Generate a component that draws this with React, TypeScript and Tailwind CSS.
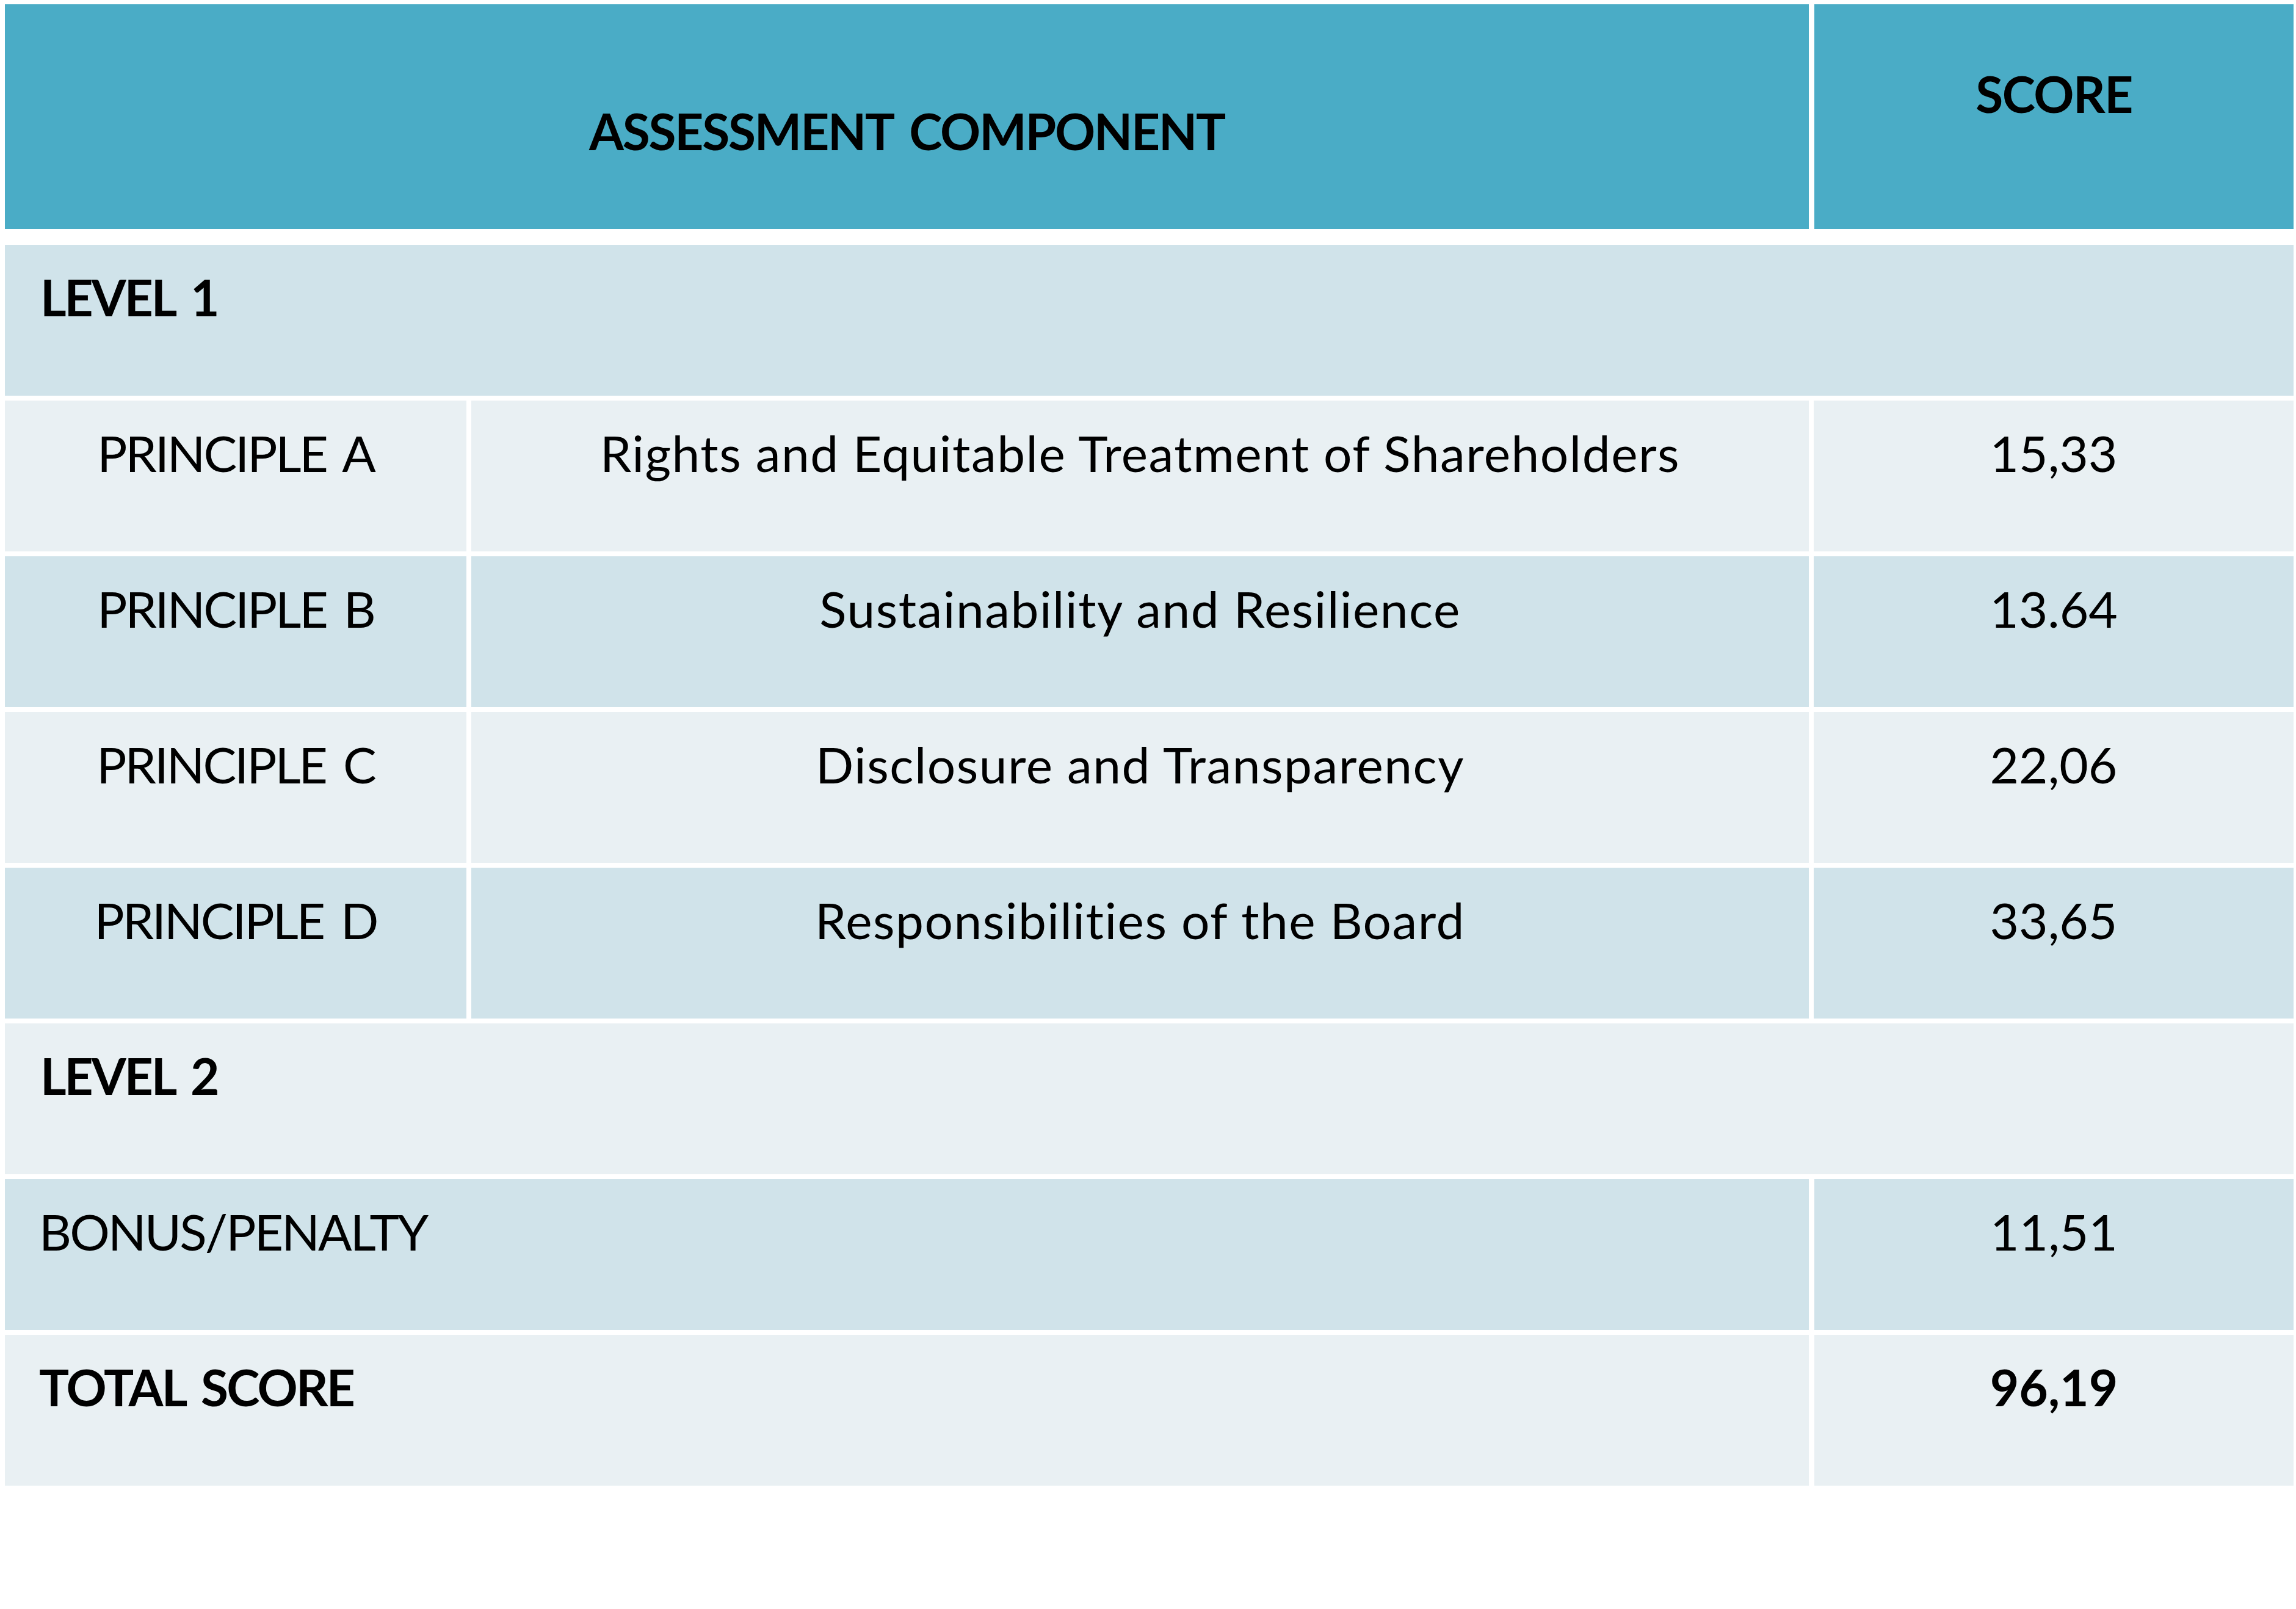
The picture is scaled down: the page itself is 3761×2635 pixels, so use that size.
import React from 'react';

type Row =
  | { kind: 'level'; label: string; tone: 'dark' | 'light' }
  | { kind: 'principle'; label: string; text: string; score: string; tone: 'dark' | 'light' }
  | { kind: 'wide'; label: string; score: string; tone: 'dark' | 'light'; bold?: boolean };

const ROWS: Row[] = [
  { kind: 'level', label: 'LEVEL 1', tone: 'dark' },
  { kind: 'principle', label: 'PRINCIPLE A', text: 'Rights and Equitable Treatment of Shareholders', score: '15,33', tone: 'light' },
  { kind: 'principle', label: 'PRINCIPLE B', text: 'Sustainability and Resilience', score: '13.64', tone: 'dark' },
  { kind: 'principle', label: 'PRINCIPLE C', text: 'Disclosure and Transparency', score: '22,06', tone: 'light' },
  { kind: 'principle', label: 'PRINCIPLE D', text: 'Responsibilities of the Board', score: '33,65', tone: 'dark' },
  { kind: 'level', label: 'LEVEL 2', tone: 'light' },
  { kind: 'wide', label: 'BONUS/PENALTY', score: '11,51', tone: 'dark' },
  { kind: 'wide', label: 'TOTAL SCORE', score: '96,19', tone: 'light', bold: true },
];

const tone = (t: 'dark' | 'light') => (t === 'dark' ? 'bg-[#d0e3ea]' : 'bg-[#e9f0f3]');

function TableRow({ row }: { row: Row }) {
  const bg = tone(row.tone);
  if (row.kind === 'level') {
    return (
      <div className={`h-[247px] ${bg} pl-[58px] pt-[44px] font-bold tracking-[-3px] [word-spacing:10px]`}>
        {row.label}
      </div>
    );
  }
  if (row.kind === 'principle') {
    return (
      <div className="flex h-[247px] gap-[8px]">
        <div className={`w-[756px] ${bg} pt-[44px] text-center tracking-[-3px] [word-spacing:10px]`}>{row.label}</div>
        <div className={`w-[2191px] ${bg} pt-[44px] text-center tracking-[1.5px]`}>{row.text}</div>
        <div className={`flex-1 ${bg} pt-[44px] text-center`}>{row.score}</div>
      </div>
    );
  }
  return (
    <div className={`flex h-[247px] gap-[9px] ${row.bold ? 'font-bold' : ''}`}>
      <div className={`w-[2955px] ${bg} pl-[56px] pt-[44px] tracking-[-2.8px] [word-spacing:10px]`}>{row.label}</div>
      <div className={`flex-1 ${bg} pt-[44px] text-center`}>{row.score}</div>
    </div>
  );
}

export default function App() {
  return (
    <div className="min-h-[2635px] bg-white pl-[8px] pr-[4px] pt-[7px] font-['Lato',sans-serif] text-[82px] leading-none text-black">
      <div className="flex h-[368px] gap-[9px] font-bold">
        <div className="flex w-[2955px] justify-center bg-[#4aacc6] pt-[166px] tracking-[-2.2px] [word-spacing:10px]">ASSESSMENT COMPONENT</div>
        <div className="flex flex-1 justify-center bg-[#4aacc6] pt-[105px] tracking-[-1.5px]">SCORE</div>
      </div>
      <div className="mt-[26px] flex flex-col gap-[8px]">
        {ROWS.map((r) => (
          <TableRow key={r.label} row={r} />
        ))}
      </div>
    </div>
  );
}
